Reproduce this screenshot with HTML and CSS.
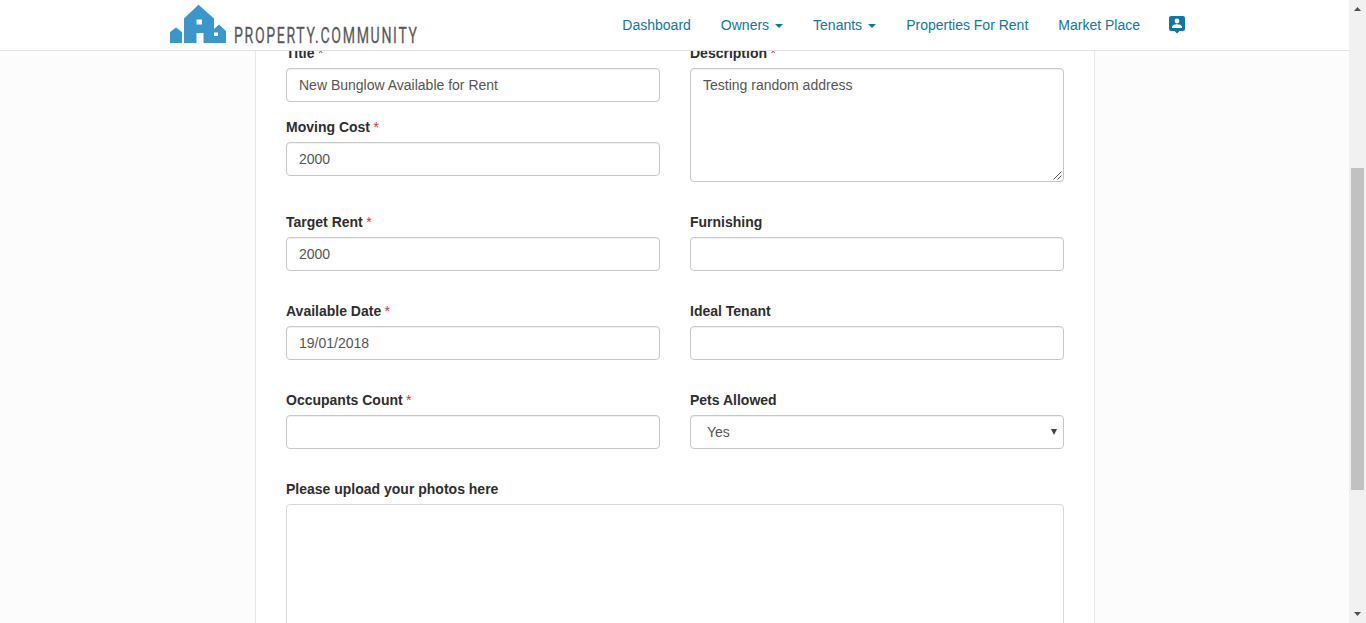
FILE: index.html
```
<!DOCTYPE html>
<html lang="en">
<head>
<meta charset="utf-8">
<title>Property Community</title>
<link rel="stylesheet" href="styles.css">
</head>
<body>
<div class="page">
  <header class="navbar">
    <a class="brand">
      <svg class="logo" width="250" height="42" viewBox="0 0 250 42">
        <path fill="#3b97cb" fill-rule="evenodd" d="M0 39V28L6 23.500L12 28V39ZM14 39V14.500L28.500 .7L44 14.500V25L49 20.500L56 27V39H33.500V29H26.500V39ZM26.500 15.500H32V20.500H26.500ZM44 28.500V32H48V28.500Z"/>
        <text class="wordmark" x="0" y="0" transform="translate(64 39) scale(.64 1)" textLength="286">PROPERTY.COMMUNITY</text>
      </svg>
    </a>
    <nav class="menu">
      <a>Dashboard</a>
      <a>Owners<i class="caret"></i></a>
      <a>Tenants<i class="caret"></i></a>
      <a>Properties For Rent</a>
      <a>Market Place</a>
      <svg class="user" width="16" height="18" viewBox="0 0 16 18"><path fill="#1076a8" d="M2 0H14Q16 0 16 2V13Q16 15 14 15H10.500L8 17.500L5.500 15H2Q0 15 0 13V2Q0 0 2 0Z"/><circle cx="8" cy="5" r="2.400" fill="#fff"/><path fill="#fff" d="M3 12V11C3 9 6.500 8.300 8 8.300S13 9 13 11V12Z"/></svg>
    </nav>
  </header>
  <main class="content">
    <form class="panel">
      <div class="row">
        <div class="col">
          <div class="field"><label>Title <b>*</b></label><div class="control">New Bunglow Available for Rent</div></div>
          <div class="field"><label>Moving Cost <b>*</b></label><div class="control">2000</div></div>
        </div>
        <div class="col">
          <div class="field"><label>Description <b>*</b></label>
            <div class="control area">Testing random address<svg class="grip" width="9" height="9" viewBox="0 0 9 9"><path d="M.5 8.500L8.500 .5M4.500 8.500L8.500 4.500" stroke="#555"/></svg></div>
          </div>
        </div>
      </div>
      <div class="row">
        <div class="field"><label>Target Rent <b>*</b></label><div class="control">2000</div></div>
        <div class="field"><label>Furnishing</label><div class="control"></div></div>
      </div>
      <div class="row">
        <div class="field"><label>Available Date <b>*</b></label><div class="control">19/01/2018</div></div>
        <div class="field"><label>Ideal Tenant</label><div class="control"></div></div>
      </div>
      <div class="row">
        <div class="field"><label>Occupants Count <b>*</b></label><div class="control"></div></div>
        <div class="field"><label>Pets Allowed</label><div class="control select">Yes<svg width="6" height="6" viewBox="0 0 6 6"><path d="M0 0H6L3 6Z" fill="#444"/></svg></div></div>
      </div>
      <div class="field"><label>Please upload your photos here</label><div class="dropzone"></div></div>
    </form>
  </main>
</div>
<aside class="scrollbar">
  <svg width="7" height="4" viewBox="0 0 7 4"><path d="M0 4L3.500 0L7 4Z" fill="#505050"/></svg>
  <div class="thumb"></div>
  <svg width="7" height="4" viewBox="0 0 7 4"><path d="M0 0H7L3.500 4Z" fill="#505050"/></svg>
</aside>
</body>
</html>
```
FILE: styles.css
```
* { box-sizing: border-box; }
body {
  margin: 0;
  height: 623px;
  display: flex;
  overflow: hidden;
  background: #fcfcfc;
  font: 14px/20px "Liberation Sans", Arial, sans-serif;
}
.page { flex: 1; display: flex; flex-direction: column; overflow: hidden; }
.navbar {
  flex: 0 0 51px;
  display: flex;
  justify-content: space-between;
  padding: 0 164px 0 170px;
  background: #fff;
  border-bottom: 1px solid #e2e2e2;
}
.logo { display: block; margin-top: 4px; overflow: visible; }
.wordmark { font: 22px "Roboto", sans-serif; fill: #58595b; stroke: #58595b; stroke-width: .25px; }
.menu { display: flex; gap: 30px; padding-top: 15px; color: #1076a8; }
.menu a { white-space: nowrap; }
.caret {
  display: inline-block;
  margin-left: 6px;
  vertical-align: middle;
  border: 4px solid transparent;
  border-top-color: #1076a8;
  border-bottom: 0;
}
.user { display: block; margin: 1px 0 0 -1px; }
.content { flex: 1; overflow: hidden; }
.panel {
  width: 840px;
  height: 700px;
  margin: -8px 0 0 255px;
  padding: 0 30px;
  background: #fff;
  border: solid #e7e7e7;
  border-width: 0 1px;
}
.row { display: grid; grid-template-columns: 374px 374px; gap: 30px; margin-bottom: 30px; }
.col { display: flex; flex-direction: column; gap: 15px; }
label { display: block; margin-bottom: 5px; font-weight: bold; color: #2e2e2e; }
label b { color: #e8273c; font-weight: normal; margin-left: -.5px; }
.control {
  height: 34px;
  padding: 6px 12px;
  color: #555;
  background: #fff;
  border: 1px solid #c8c8c8;
  border-radius: 4px;
  box-shadow: inset 0 1px 1px rgba(0, 0, 0, .06);
}
.area { height: 114px; position: relative; }
.grip { position: absolute; right: 1px; bottom: 1px; }
.select { display: flex; align-items: center; justify-content: space-between; padding: 0 6px 0 16px; }
.dropzone { height: 160px; border: 1px solid #d9d9d9; border-radius: 4px; }
.scrollbar {
  width: 17px;
  display: flex;
  flex-direction: column;
  align-items: center;
  padding: 7px 0;
  background: #f1f1f1;
}
.thumb { width: 13px; height: 322px; margin: 157px 0 auto; background: #c1c1c1; }
```
